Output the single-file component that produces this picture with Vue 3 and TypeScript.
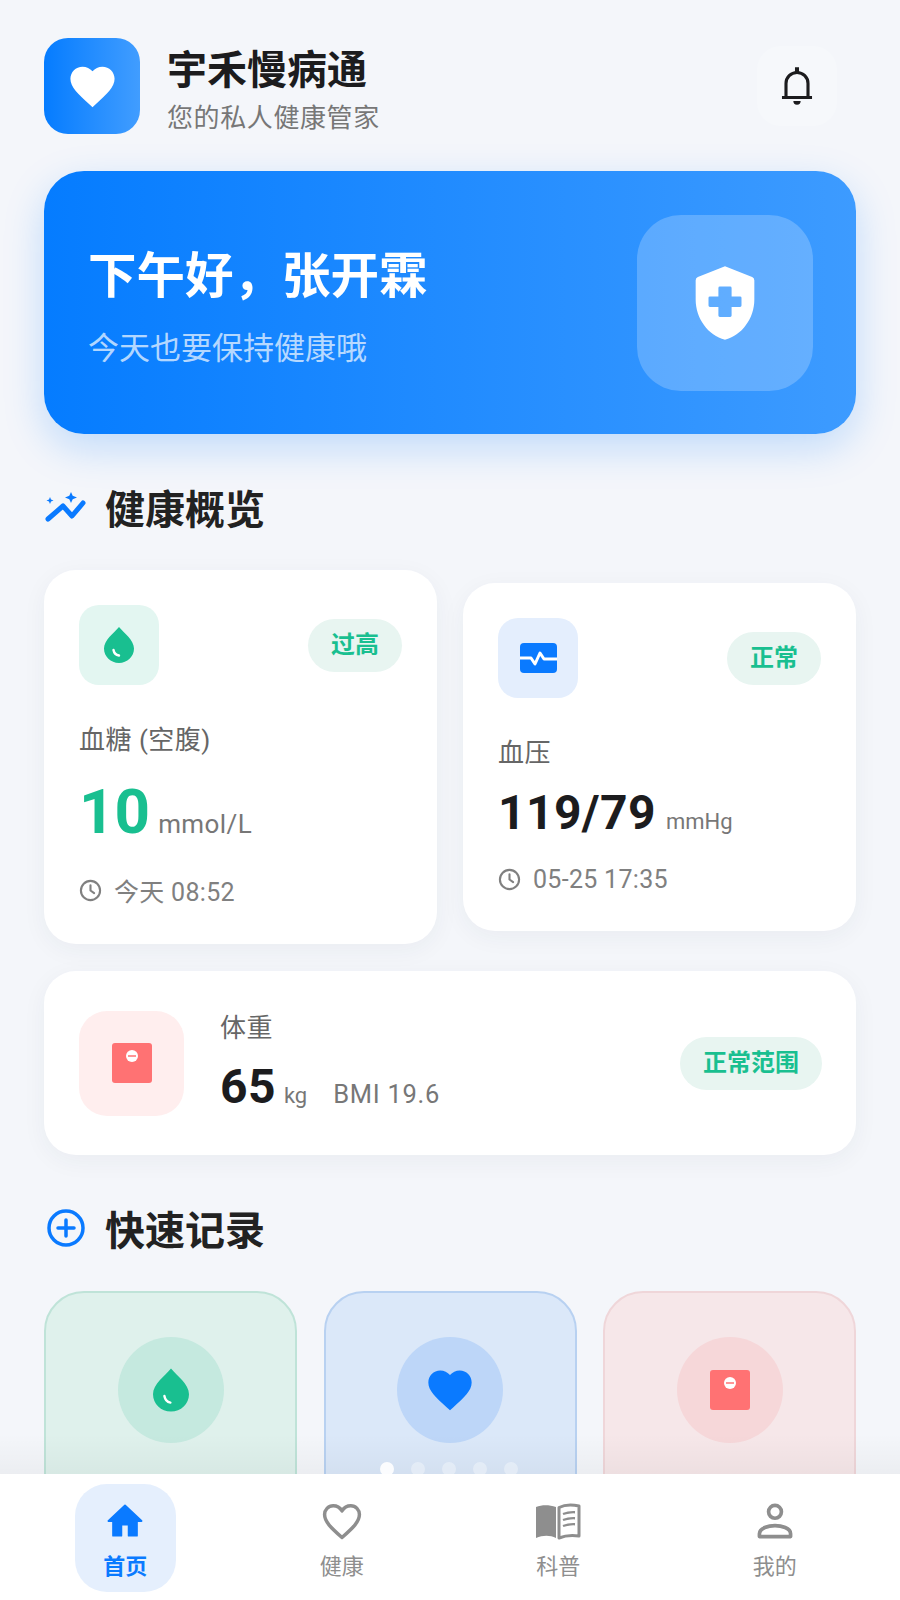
<script setup lang="ts">
// Startseite: Kopf, Begrüßung, Gesundheitsübersicht, Schnellerfassung, Navigation
const dots = [0, 1, 2, 3, 4]
</script>

<template>
  <div class="screen">
    <main class="content">
      <header class="top">
        <div class="logo">
          <svg width="53" height="53" viewBox="0 0 24 24"><path fill="#fff" d="M12 21.35l-1.45-1.32C5.4 15.36 2 12.28 2 8.5 2 5.42 4.42 3 7.5 3c1.74 0 3.41.81 4.5 2.09C13.09 3.81 14.76 3 16.5 3 19.58 3 22 5.42 22 8.5c0 3.78-3.4 6.86-8.55 11.54L12 21.35z" /></svg>
        </div>
        <div class="brand">
          <h1>宇禾慢病通</h1>
          <p>您的私人健康管家</p>
        </div>
        <div class="bell">
          <svg width="44" height="44" viewBox="0 0 24 24"><path fill="none" stroke="#1c1c1e" stroke-width="1.7" stroke-linejoin="round" d="M6 18V10.6a6 6 0 0 1 12 0V18M3.800 18.300h16.400" /><path fill="#1c1c1e" d="M10.900 1.800h2.200v3h-2.200zM10 20.200h4a2 2 0 0 1-4 0z" /></svg>
        </div>
      </header>

      <section class="hero">
        <div class="hero-text">
          <h2>下午好，张开霖</h2>
          <p>今天也要保持健康哦</p>
        </div>
        <div class="hero-icon">
          <svg width="88" height="88" viewBox="0 0 24 24"><path fill="#fff" fill-rule="evenodd" d="M12 2 4.600 4.900a1 1 0 0 0-.6.9v5.290c0 5.050 3.410 9.760 8 10.910 4.590-1.150 8-5.860 8-10.910V5.800a1 1 0 0 0-.6-.9L12 2zM10.600 7.500h2.800a.4.4 0 0 1 .4.4v2.300h2.300a.4.4 0 0 1 .4.4v2.100a.4.4 0 0 1-.4.4h-2.300v2.300a.4.4 0 0 1-.4.4h-2.800a.4.4 0 0 1-.4-.4v-2.300H7.900a.4.4 0 0 1-.4-.4v-2.100a.4.4 0 0 1 .4-.4h2.300V7.900a.4.4 0 0 1 .4-.4z" /></svg>
        </div>
      </section>

      <div class="sec-head first">
        <svg width="44" height="36" viewBox="0 0 44 36">
          <path fill="none" stroke="#0a7aff" stroke-width="5" stroke-linecap="round" stroke-linejoin="round" d="M4 27 19 14l9 10 11-13" />
          <path fill="#0a7aff" d="M27 0l1.700 3.800L33 5.500l-4.300 1.700L27 11l-1.700-3.800L21 5.500l4.300-1.700zM6 5l1 2.500L9.500 8.500 7 9.500 6 12l-1-2.500-2.500-1L5 7.500z" />
        </svg>
        <h3>健康概览</h3>
      </div>

      <div class="metrics">
        <article class="card">
          <div class="card-top">
            <div class="tile tile-green">
              <svg width="30" height="36" viewBox="0 0 30 36"><path fill="#19bf90" d="M15 0C10 6 0 13 0 21.500 0 29.500 6.700 36 15 36s15-6.500 15-14.500C30 13 20 6 15 0z" /><path fill="none" stroke="#fff" stroke-width="2.400" stroke-linecap="round" d="M9.500 23c.5 3 2.500 5 5.500 5.500" /></svg>
            </div>
            <span class="badge">过高</span>
          </div>
          <div class="label">血糖 (空腹)</div>
          <div class="value big"><b>10</b><span>mmol/L</span></div>
          <div class="time">
            <svg width="23" height="23" viewBox="0 0 24 24"><circle cx="12" cy="12" r="10" fill="none" stroke="#808080" stroke-width="2.200" /><path fill="none" stroke="#808080" stroke-width="2.200" stroke-linecap="round" stroke-linejoin="round" d="M12 6.500V12l3.800 2.800" /></svg>
            今天 08:52
          </div>
        </article>

        <article class="card">
          <div class="card-top">
            <div class="tile tile-blue">
              <svg width="37" height="30" viewBox="0 0 37 30"><rect width="37" height="30" rx="4" fill="#0a7aff" /><path fill="none" stroke="#fff" stroke-width="3" stroke-linejoin="round" d="M0 15h11l4 6 5-11 4 6h13" /></svg>
            </div>
            <span class="badge">正常</span>
          </div>
          <div class="label">血压</div>
          <div class="value mid"><b>119/79</b><span>mmHg</span></div>
          <div class="time">
            <svg width="23" height="23" viewBox="0 0 24 24"><circle cx="12" cy="12" r="10" fill="none" stroke="#808080" stroke-width="2.200" /><path fill="none" stroke="#808080" stroke-width="2.200" stroke-linecap="round" stroke-linejoin="round" d="M12 6.500V12l3.800 2.800" /></svg>
            05-25 17:35
          </div>
        </article>
      </div>

      <article class="card weight">
        <div class="tile tile-red">
          <svg width="40" height="40" viewBox="0 0 40 40"><rect width="40" height="40" rx="3" fill="#ff7273" /><circle cx="20" cy="13" r="6" fill="#fff" /><path stroke="#ff7273" stroke-width="1.500" d="M16 13h8" /></svg>
        </div>
        <div class="weight-text">
          <div class="label">体重</div>
          <div class="value mid"><b>65</b><span>kg</span><em>BMI 19.6</em></div>
        </div>
        <span class="badge">正常范围</span>
      </article>

      <div class="sec-head second">
        <svg width="44" height="38" viewBox="0 0 44 38"><circle cx="22" cy="19" r="17" fill="none" stroke="#0a7aff" stroke-width="3.500" /><path stroke="#0a7aff" stroke-width="3.500" stroke-linecap="round" d="M22 11v16M14 19h16" /></svg>
        <h3>快速记录</h3>
      </div>

      <div class="quick">
        <div class="quick-card q-green">
          <div class="disc">
            <svg width="36" height="44" viewBox="0 0 30 36"><path fill="#19bf90" d="M15 0C10 6 0 13 0 21.500 0 29.500 6.700 36 15 36s15-6.500 15-14.500C30 13 20 6 15 0z" /><path fill="none" stroke="#fff" stroke-width="2" stroke-linecap="round" d="M9.500 23c.5 3 2.500 5 5 5.500" /></svg>
          </div>
        </div>
        <div class="quick-card q-blue">
          <div class="disc">
            <svg width="52" height="52" viewBox="0 0 24 24"><path fill="#0a7aff" d="M12 21.350l-1.450-1.320C5.400 15.360 2 12.280 2 8.500 2 5.420 4.420 3 7.500 3c1.740 0 3.410.81 4.500 2.090C13.090 3.810 14.760 3 16.500 3 19.580 3 22 5.420 22 8.500c0 3.780-3.400 6.860-8.550 11.540L12 21.350z" /></svg>
          </div>
        </div>
        <div class="quick-card q-red">
          <div class="disc">
            <svg width="40" height="40" viewBox="0 0 40 40"><rect width="40" height="40" rx="3" fill="#ff7273" /><circle cx="20" cy="13" r="6" fill="#fff" /><path stroke="#ff7273" stroke-width="1.500" d="M16 13h8" /></svg>
          </div>
        </div>
      </div>

      <div class="fade"></div>
      <div class="dots">
        <i v-for="d in dots" :key="d" :class="{ on: d === 0 }"></i>
      </div>
    </main>

    <nav class="tabs">
      <div class="tab active">
        <svg width="44" height="44" viewBox="0 0 24 24"><path fill="#0a7aff" stroke="#0a7aff" stroke-width="1" stroke-linejoin="round" d="M10 20v-6h4v6h4.500v-8H21L12 3.500 3 12h2.500v8z" /></svg>
        <span>首页</span>
      </div>
      <div class="tab">
        <svg width="44" height="44" viewBox="0 0 24 24"><path fill="none" stroke="#8e8e8e" stroke-width="1.900" stroke-linejoin="round" d="M12 21c-6-5.300-9.500-8.600-9.500-12.500C2.500 5.900 4.500 3.700 7.200 3.700c1.900 0 3.700 1 4.800 2.800 1.100-1.800 2.900-2.800 4.800-2.800 2.700 0 4.700 2.200 4.700 4.800C21.500 12.400 18 15.700 12 21z" /></svg>
        <span>健康</span>
      </div>
      <div class="tab">
        <svg width="46" height="44" viewBox="0 0 46 36"><path fill="#8e8e8e" d="M1 4c6-2.500 13-2.500 20 0v31c-6-3-13-3-20 0z" /><path fill="none" stroke="#8e8e8e" stroke-width="3" stroke-linejoin="round" d="M24 4.500c6-3 13-3 20-1.500v30c-7-1-14-.5-20 2z" /><path stroke="#8e8e8e" stroke-width="2.400" d="M28 11c4-1.500 8-2 12-1.800M28 17c4-1.500 8-2 12-1.800M28 23c4-1.500 8-2 12-1.800" /></svg>
        <span>科普</span>
      </div>
      <div class="tab">
        <svg width="44" height="44" viewBox="0 0 24 24"><circle cx="12" cy="7" r="3.500" fill="none" stroke="#8e8e8e" stroke-width="2" /><path fill="none" stroke="#8e8e8e" stroke-width="2" stroke-linejoin="round" d="M3.500 20.500v-1.600c0-3 5-4.400 8.500-4.400s8.500 1.400 8.500 4.400v1.600z" /></svg>
        <span>我的</span>
      </div>
    </nav>
  </div>
</template>

<style>
html,
body {
  margin: 0;
  background: #f4f6fa;
}
</style>

<style scoped>
.screen {
  width: 900px;
  height: 1600px;
  display: flex;
  flex-direction: column;
  overflow: hidden;
  background: #f4f6fa;
  color: #1c1c1e;
  font-family: Roboto, "Noto Sans CJK SC", sans-serif;
}

.content {
  position: relative;
  height: 1474px;
  padding: 38px 44px 0;
  box-sizing: border-box;
  overflow: hidden;
}

h1,
h2,
h3,
p {
  margin: 0;
}

.top {
  display: flex;
  align-items: center;
  height: 96px;
}

.logo {
  width: 96px;
  height: 96px;
  border-radius: 24px;
  background: linear-gradient(90deg, #057cff, #419dff);
  display: flex;
  align-items: center;
  justify-content: center;
}

.brand {
  margin-left: 27px;
  padding-top: 7px;
  flex: 1;
}

.brand h1 {
  font-size: 40px;
  line-height: 56px;
  font-weight: 700;
}

.brand p {
  margin-top: 1px;
  font-size: 26px;
  line-height: 36px;
  letter-spacing: 0.6px;
  color: #777;
}

.bell {
  width: 80px;
  height: 80px;
  margin-right: 19px;
  border-radius: 24px;
  background: #f6f8fb;
  display: flex;
  align-items: center;
  justify-content: center;
}

.hero {
  margin-top: 37px;
  height: 263px;
  box-sizing: border-box;
  padding: 0 43px 0 44px;
  border-radius: 40px;
  background: linear-gradient(90deg, #057cff, #3d9bff);
  box-shadow: 0 14px 40px rgba(10, 122, 255, 0.22);
  display: flex;
  align-items: center;
  justify-content: space-between;
  color: #fff;
}

.hero-text {
  padding-top: 10px;
}

.hero h2 {
  font-size: 48.5px;
  line-height: 64px;
  font-weight: 700;
}

.hero p {
  margin-top: 18px;
  font-size: 31px;
  line-height: 44px;
  color: rgba(255, 255, 255, 0.7);
}

.hero-icon {
  width: 176px;
  height: 176px;
  border-radius: 44px;
  background: rgba(255, 255, 255, 0.22);
  display: flex;
  align-items: center;
  justify-content: center;
}

.sec-head {
  display: flex;
  align-items: center;
  gap: 17px;
  height: 56px;
}

.sec-head.first {
  margin-top: 48px;
}

.sec-head.second {
  margin-top: 47px;
}

.sec-head.second svg {
  margin-top: -5px;
}

.sec-head h3 {
  padding-top: 2px;
  font-size: 40px;
  line-height: 56px;
  font-weight: 700;
  color: #222;
}

.sec-head.second h3 {
  padding-top: 4px;
}

.metrics {
  margin-top: 32px;
  display: grid;
  grid-template-columns: 1fr 1fr;
  column-gap: 26px;
  align-items: center;
}

.card {
  padding: 35px;
  border-radius: 32px;
  background: #fff;
  box-shadow: 0 6px 24px rgba(30, 50, 80, 0.05);
}

.card-top {
  display: flex;
  align-items: center;
  justify-content: space-between;
}

.tile {
  width: 80px;
  height: 80px;
  border-radius: 20px;
  display: flex;
  align-items: center;
  justify-content: center;
  flex-shrink: 0;
}

.tile-green {
  background: #e3f6f1;
}

.tile-blue {
  background: #e4eefd;
}

.tile-red {
  width: 105px;
  height: 105px;
  border-radius: 28px;
  background: #ffeeee;
}

.badge {
  height: 53px;
  padding: 0 23px;
  border-radius: 27px;
  background: #e8f5f1;
  color: #19bf90;
  font-size: 24px;
  font-weight: 700;
  line-height: 53px;
}

.label {
  margin-top: 37px;
  font-size: 26px;
  line-height: 36px;
  letter-spacing: 0.5px;
  color: #666;
}

.value {
  margin-top: 14px;
  display: flex;
  align-items: baseline;
}

.value b {
  font-weight: 700;
}

.value span {
  margin-left: 10px;
  color: #777;
}

.value.big {
  height: 80px;
  line-height: 80px;
  margin-bottom: -2px;
}

.value.big b {
  font-size: 62px;
  color: #19bf90;
}

.value.big span {
  margin-left: 8px;
  font-size: 26px;
  letter-spacing: 0.4px;
}

.value.big + .time {
  margin-bottom: 2px;
}

.value.mid {
  height: 52px;
  line-height: 52px;
  margin-top: 16px;
  margin-bottom: 6px;
}

.value.mid b {
  font-size: 48px;
  letter-spacing: 0.4px;
}

.value.mid span {
  font-size: 22px;
}

.time {
  margin-top: 23px;
  display: flex;
  align-items: center;
  gap: 12px;
  height: 34px;
  font-size: 25px;
  letter-spacing: 0.3px;
  color: #808080;
}

.weight {
  margin-top: 27px;
  height: 184px;
  box-sizing: border-box;
  padding: 0 34px 0 35px;
  display: flex;
  align-items: center;
}

.weight-text {
  margin-left: 36px;
  flex: 1;
}

.weight-text .label {
  margin-top: 0;
}

.weight-text .value {
  margin-top: 15px;
  margin-bottom: 3px;
}

.weight-text .value span {
  margin-left: 8px;
}

.weight-text em {
  margin-left: 26px;
  font-style: normal;
  font-size: 25.5px;
  letter-spacing: 0.7px;
  color: #777;
}

.quick {
  margin-top: 33px;
  display: grid;
  grid-template-columns: repeat(3, 1fr);
  column-gap: 26.5px;
}

.quick-card {
  height: 260px;
  box-sizing: border-box;
  padding-top: 44px;
  border: 2px solid;
  border-radius: 40px;
}

.disc {
  width: 106px;
  height: 106px;
  margin: 0 auto;
  border-radius: 50%;
  display: flex;
  align-items: center;
  justify-content: center;
}

.q-green {
  background: #dff1ec;
  border-color: #bfe3d8;
}

.q-green .disc {
  background: #c5e9df;
}

.q-blue {
  background: #dbe8f9;
  border-color: #b8d1f1;
}

.q-blue .disc {
  background: #bdd6f8;
}

.q-red {
  background: #f6e7e9;
  border-color: #efd6d9;
}

.q-red .disc {
  background: #f6d7d9;
}

/* leichter Schatten über dem Inhalt direkt oberhalb der Navigation */
.fade {
  position: absolute;
  left: 0;
  right: 0;
  bottom: 0;
  height: 40px;
  background: linear-gradient(180deg, rgba(0, 0, 0, 0), rgba(0, 0, 0, 0.035));
}

.dots {
  position: absolute;
  left: 380px;
  bottom: -2px;
  display: flex;
  gap: 17px;
}

.dots i {
  width: 14px;
  height: 14px;
  border-radius: 50%;
  background: rgba(255, 255, 255, 0.35);
}

.dots i.on {
  background: rgba(255, 255, 255, 0.9);
}

.tabs {
  position: relative;
  flex: 1;
  padding: 10px 17px 8px;
  display: grid;
  grid-template-columns: repeat(4, 1fr);
  background: #fff;
}

.tab {
  justify-self: center;
  width: 101px;
  height: 108px;
  border-radius: 32px;
  display: flex;
  flex-direction: column;
  align-items: center;
  padding-top: 15px;
  box-sizing: border-box;
  font-size: 22px;
  color: #8e8e8e;
}

.tab span {
  margin-top: 9px;
  line-height: 30px;
}

.tab.active {
  background: #e5effd;
  color: #0a7aff;
  font-weight: 700;
}
</style>
